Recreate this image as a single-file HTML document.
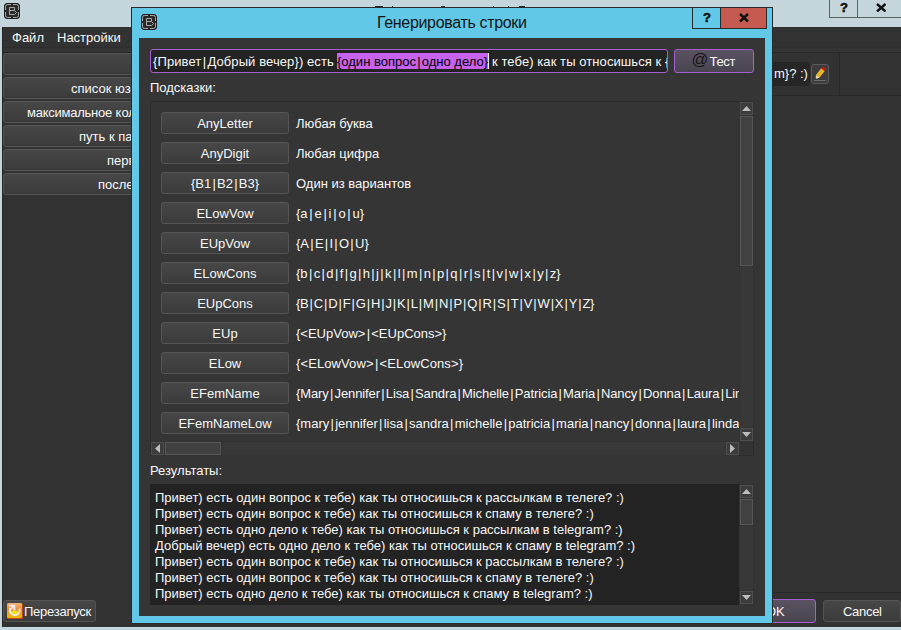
<!DOCTYPE html>
<html><head><meta charset="utf-8">
<style>
*{margin:0;padding:0;box-sizing:border-box}
html,body{width:901px;height:630px;overflow:hidden;background:#c5d5dc;font-family:"Liberation Sans",sans-serif;font-size:13px;color:#f8f8f8}
.a{position:absolute}
.t{position:absolute;white-space:pre;line-height:16px}
.btn{position:absolute;border:1px solid #555;border-radius:3px;background:linear-gradient(#474747,#3b3b3b)}
.pbtn{position:absolute;border:1px solid #a65fd0;border-radius:3px;background:linear-gradient(#5a5262,#4a4450)}
.sb{position:absolute;border:1px solid #4f4f4f;background:#3c3c3c}
.p{display:inline-block;margin:0 1.25px}
.hb{position:absolute;left:10px;width:128px;height:22px;border:1px solid #555;border-radius:2.5px;background:linear-gradient(#474747,#3b3b3b);text-align:center;line-height:22px;white-space:pre}
.hd{position:absolute;left:145px;white-space:pre;line-height:16px}
</style></head><body>

<svg class="a" style="left:4px;top:3px" width="16" height="16" viewBox="0 0 16 16">
<rect x="0.5" y="0.5" width="15" height="15" rx="2.5" fill="#2a2a2a" stroke="#1c1c1c"/>
<path d="M1.5 7V3.5Q1.5 1.5 3.5 1.5H7M9 1.5H12.5Q14.5 1.5 14.5 3.5V7M14.5 9V12.5Q14.5 14.5 12.5 14.5H9M7 14.5H3.5Q1.5 14.5 1.5 12.5V9" fill="none" stroke="#a8a8a8" stroke-width="1"/>
<path d="M5.5 4.5H10.5V7.5M5.5 4.5V11.5H10.5L12.5 9.5L10.5 7.5H5.5" fill="none" stroke="#a8a8a8" stroke-width="1"/>
</svg>
<div class="a" style="left:829px;top:-1px;width:29px;height:19px;border:1px solid #5a6266;background:#c5d5dc"></div>
<div class="a" style="left:857px;top:-1px;width:45px;height:19px;border:1px solid #5a6266;background:#c5d5dc"></div>
<div class="t" style="left:840px;top:0px;font-weight:bold;color:#111;font-size:13px;-webkit-text-stroke:0.6px #111">?</div>
<svg class="a" style="left:875.5px;top:2.5px" width="10.5" height="9.5" viewBox="0 0 10.5 9.5"><path d="M1 1L9.5 8.5M9.5 1L1 8.5" stroke="#111" stroke-width="2.4" stroke-linecap="butt"/></svg>
<div class="a" style="left:2px;top:27px;width:899px;height:600px;background:#323232;border-left:1px solid #262626"></div>
<div class="a" style="left:3px;top:47px;width:898px;height:1px;background:#2d2d2d"></div>
<div class="a" style="left:3px;top:48px;width:898px;height:4px;background:#343434"></div>
<div class="a" style="left:3px;top:52px;width:898px;height:1px;background:#282828"></div>
<div class="t" style="left:12px;top:30px">Файл</div>
<div class="t" style="left:57px;top:30px">Настройки</div>
<div class="btn" style="left:3px;top:53px;width:140px;height:22px"></div>
<div class="btn" style="left:3px;top:77px;width:140px;height:22px"></div>
<div class="t" style="left:71px;top:81px">список юзеров</div>
<div class="btn" style="left:3px;top:101px;width:140px;height:22px"></div>
<div class="t" style="left:27px;top:105px"><span style="letter-spacing:-0.25px">максимальное</span> количество</div>
<div class="btn" style="left:3px;top:125px;width:140px;height:22px"></div>
<div class="t" style="left:79px;top:129px">путь к папке</div>
<div class="btn" style="left:3px;top:149px;width:140px;height:22px"></div>
<div class="t" style="left:107px;top:153px">первый</div>
<div class="btn" style="left:3px;top:173px;width:140px;height:22px"></div>
<div class="t" style="left:98px;top:177px">последний</div>
<div class="a" style="left:839px;top:52px;width:1px;height:43px;background:#282828"></div>
<div class="a" style="left:772px;top:95px;width:129px;height:1px;background:#282828"></div>
<div class="a" style="left:700px;top:62px;width:110px;height:24px;background:#262626;border-radius:4px"></div>
<div class="t" style="left:774px;top:66px">m}? :)</div>
<div class="a" style="left:811px;top:64px;width:18px;height:20px;border:1px solid #5a5a5a;border-radius:3px;background:#3c3c3c"></div>
<svg class="a" style="left:811px;top:64px" width="18" height="20" viewBox="0 0 18 20">
<polygon points="8.39,13.81 4.93,11.09 10.27,4.34 13.73,7.06" fill="#e8b428"/>
<polygon points="10.27,4.34 13.73,7.06 15.28,5.1 11.82,2.38" fill="#c41818"/>
<polygon points="8.39,13.81 4.93,11.09 4.6,15.2" fill="#f2e2b8"/>
<polygon points="5.6,14.2 4.8,13.6 4.4,15.4" fill="#111"/>
<rect x="3" y="16" width="11.5" height="1" fill="#707070"/>
</svg>
<div class="a" style="left:772px;top:592px;width:129px;height:1px;background:#282828"></div>
<div class="pbtn" style="left:740px;top:599px;width:76px;height:24px"></div>
<div class="t" style="left:766px;top:604px">OK</div>
<div class="btn" style="left:823px;top:600px;width:78px;height:22px"></div>
<div class="t" style="left:843px;top:604px;letter-spacing:-0.3px">Cancel</div>
<div class="btn" style="left:3px;top:600px;width:93px;height:22px"></div>
<svg class="a" style="left:7px;top:603px" width="16" height="16" viewBox="0 0 16 16">
<defs><linearGradient id="og" x1="0" y1="0" x2="0" y2="1"><stop offset="0" stop-color="#f2b27a"/><stop offset="0.45" stop-color="#ea9330"/><stop offset="1" stop-color="#f0b800"/></linearGradient></defs>
<rect x="0" y="0" width="16" height="16" rx="1.5" fill="#c04818"/>
<rect x="0" y="0" width="15" height="15" rx="1.5" fill="url(#og)"/>
<ellipse cx="7.6" cy="9.8" rx="3.4" ry="2.4" fill="#f6e200"/>
<path d="M3.4 5.2A4.9 4.9 0 1 0 12.4 5.6" fill="none" stroke="#ececf2" stroke-width="1.9"/>
<path d="M2.2 2.6H7.4V7.6" fill="none" stroke="#ececf2" stroke-width="1.7"/>
<path d="M7.2 2.8L3.6 6.2" fill="none" stroke="#ececf2" stroke-width="1.6"/>
</svg>
<div class="t" style="left:24px;top:604px;letter-spacing:-0.25px">Перезапуск</div>
<div class="a" style="left:375px;top:6px;width:8px;height:1px;background:#222"></div>
<div class="a" style="left:392px;top:6px;width:1px;height:1px;background:#222"></div>
<div class="a" style="left:441px;top:6px;width:4px;height:1px;background:#222"></div>
<div class="a" style="left:493px;top:6px;width:1px;height:1px;background:#222"></div>
<div class="a" style="left:508px;top:6px;width:1px;height:1px;background:#222"></div>
<div class="a" style="left:519px;top:6px;width:6px;height:1px;background:#222"></div>
<div class="a" style="left:131px;top:7px;width:642px;height:617px;background:#62c8e8;border:1px solid #2a2a2a"></div>
<div class="a" style="left:139px;top:38px;width:626px;height:578px;background:#353535"></div>
<svg class="a" style="left:141px;top:14px" width="16" height="16" viewBox="0 0 16 16">
<rect x="0.5" y="0.5" width="15" height="15" rx="2.5" fill="#2a2a2a" stroke="#1c1c1c"/>
<path d="M1.5 7V3.5Q1.5 1.5 3.5 1.5H7M9 1.5H12.5Q14.5 1.5 14.5 3.5V7M14.5 9V12.5Q14.5 14.5 12.5 14.5H9M7 14.5H3.5Q1.5 14.5 1.5 12.5V9" fill="none" stroke="#a8a8a8" stroke-width="1"/>
<path d="M5.5 4.5H10.5V7.5M5.5 4.5V11.5H10.5L12.5 9.5L10.5 7.5H5.5" fill="none" stroke="#a8a8a8" stroke-width="1"/>
</svg>
<div class="t" style="left:377px;top:14px;font-size:16px;color:#151515;line-height:18px;letter-spacing:-0.33px">Генерировать строки</div>
<div class="a" style="left:692px;top:7px;width:29px;height:22px;border:1px solid #2a2a2a;background:#62c8e8"></div>
<div class="a" style="left:720px;top:7px;width:47px;height:22px;border:1px solid #2a2a2a;background:#c45a50"></div>
<div class="t" style="left:703px;top:10px;font-weight:bold;color:#111;font-size:13px;-webkit-text-stroke:0.6px #111">?</div>
<svg class="a" style="left:739px;top:13px" width="10" height="9.5" viewBox="0 0 10 9.5"><path d="M1 1L9 8.5M9 1L1 8.5" stroke="#111" stroke-width="2.4" stroke-linecap="butt"/></svg>
<div class="a" style="left:150px;top:49px;width:518px;height:24px;border:1px solid #a65fd0;border-radius:3px;background:#232323;overflow:hidden">
<div class="a" style="left:186px;top:3px;width:151px;height:16px;background:#c662ee"></div>
<div class="a" style="left:337px;top:3px;width:1px;height:16px;background:#f4f4f4"></div>
<div class="t" style="left:2px;top:4px;letter-spacing:0.1px">{Привет<span class="p">|</span>Добрый вечер}) есть</div>
<div class="t" style="left:186px;top:4px;color:#000">{один вопрос<span class="p">|</span>одно дело}</div>
<div class="t" style="left:341px;top:4px;letter-spacing:0.08px">к тебе) как ты относишься к {рассылкам<span class="p">|</span>спаму} в {телеге<span class="p">|</span>telegram}? :)</div>
</div>
<div class="pbtn" style="left:674px;top:49px;width:80px;height:24px"></div>
<div class="t" style="left:691.5px;top:50px;color:#141414;font-size:16.5px;line-height:18px;-webkit-text-stroke:0">@</div>
<div class="t" style="left:709.5px;top:54px;letter-spacing:-0.3px">Тест</div>
<div class="t" style="left:150px;top:80px">Подсказки:</div>
<div class="a" style="left:150px;top:101px;width:604px;height:355px;background:#353535;border:1px solid #2b2b2b"></div>
<div class="a" style="left:151px;top:102px;width:588px;height:340px;overflow:hidden">
<div class="hb" style="top:10px">AnyLetter</div>
<div class="hd" style="top:14px;">Любая буква</div>
<div class="hb" style="top:40px">AnyDigit</div>
<div class="hd" style="top:44px;">Любая цифра</div>
<div class="hb" style="top:70px">{B1<span class="p">|</span>B2<span class="p">|</span>B3}</div>
<div class="hd" style="top:74px;">Один из вариантов</div>
<div class="hb" style="top:100px">ELowVow</div>
<div class="hd" style="top:104px;">{a<span class="p" style="margin:0 1.75px">|</span>e<span class="p" style="margin:0 1.75px">|</span>i<span class="p" style="margin:0 1.75px">|</span>o<span class="p" style="margin:0 1.75px">|</span>u}</div>
<div class="hb" style="top:130px">EUpVow</div>
<div class="hd" style="top:134px;">{A<span class="p">|</span>E<span class="p">|</span>I<span class="p">|</span>O<span class="p">|</span>U}</div>
<div class="hb" style="top:160px">ELowCons</div>
<div class="hd" style="top:164px;">{b<span class="p" style="margin:0 1.37px">|</span>c<span class="p" style="margin:0 1.37px">|</span>d<span class="p" style="margin:0 1.37px">|</span>f<span class="p" style="margin:0 1.37px">|</span>g<span class="p" style="margin:0 1.37px">|</span>h<span class="p" style="margin:0 1.37px">|</span>j<span class="p" style="margin:0 1.37px">|</span>k<span class="p" style="margin:0 1.37px">|</span>l<span class="p" style="margin:0 1.37px">|</span>m<span class="p" style="margin:0 1.37px">|</span>n<span class="p" style="margin:0 1.37px">|</span>p<span class="p" style="margin:0 1.37px">|</span>q<span class="p" style="margin:0 1.37px">|</span>r<span class="p" style="margin:0 1.37px">|</span>s<span class="p" style="margin:0 1.37px">|</span>t<span class="p" style="margin:0 1.37px">|</span>v<span class="p" style="margin:0 1.37px">|</span>w<span class="p" style="margin:0 1.37px">|</span>x<span class="p" style="margin:0 1.37px">|</span>y<span class="p" style="margin:0 1.37px">|</span>z}</div>
<div class="hb" style="top:190px">EUpCons</div>
<div class="hd" style="top:194px;letter-spacing:-0.4px">{B<span class="p">|</span>C<span class="p">|</span>D<span class="p">|</span>F<span class="p">|</span>G<span class="p">|</span>H<span class="p">|</span>J<span class="p">|</span>K<span class="p">|</span>L<span class="p">|</span>M<span class="p">|</span>N<span class="p">|</span>P<span class="p">|</span>Q<span class="p">|</span>R<span class="p">|</span>S<span class="p">|</span>T<span class="p">|</span>V<span class="p">|</span>W<span class="p">|</span>X<span class="p">|</span>Y<span class="p">|</span>Z}</div>
<div class="hb" style="top:220px">EUp</div>
<div class="hd" style="top:224px;">{&lt;EUpVow&gt;<span class="p">|</span>&lt;EUpCons&gt;}</div>
<div class="hb" style="top:250px">ELow</div>
<div class="hd" style="top:254px;letter-spacing:0.1px">{&lt;ELowVow&gt;<span class="p">|</span>&lt;ELowCons&gt;}</div>
<div class="hb" style="top:280px">EFemName</div>
<div class="hd" style="top:284px;letter-spacing:-0.1px">{Mary<span class="p">|</span>Jennifer<span class="p">|</span>Lisa<span class="p">|</span>Sandra<span class="p">|</span>Michelle<span class="p">|</span>Patricia<span class="p">|</span>Maria<span class="p">|</span>Nancy<span class="p">|</span>Donna<span class="p">|</span>Laura<span class="p">|</span>Linda<span class="p">|</span>Barbara}</div>
<div class="hb" style="top:310px">EFemNameLow</div>
<div class="hd" style="top:314px;">{mary<span class="p">|</span>jennifer<span class="p">|</span>lisa<span class="p">|</span>sandra<span class="p">|</span>michelle<span class="p">|</span>patricia<span class="p">|</span>maria<span class="p">|</span>nancy<span class="p">|</span>donna<span class="p">|</span>laura<span class="p">|</span>linda<span class="p">|</span>barbara}</div>
</div>
<div class="a" style="left:739px;top:102px;width:15px;height:340px;background:#333"></div>
<div class="sb" style="left:740px;top:102px;width:13px;height:13px"></div>
<div class="sb" style="left:740px;top:116px;width:13px;height:150px;background:#414141;border-color:#575757"></div>
<div class="sb" style="left:740px;top:428px;width:13px;height:13px"></div>
<div class="a" style="left:740px;top:267px;width:13px;height:160px;background:#383838"></div>
<div class="a" style="left:151px;top:441px;width:588px;height:15px;background:#333"></div>
<div class="sb" style="left:151px;top:442px;width:13px;height:13px"></div>
<div class="sb" style="left:165px;top:442px;width:56px;height:13px;background:#414141;border-color:#575757"></div>
<div class="a" style="left:222px;top:442px;width:503px;height:13px;background:#383838"></div>
<div class="sb" style="left:726px;top:442px;width:13px;height:13px"></div>
<div class="a" style="left:740px;top:442px;width:13px;height:13px;background:#333"></div>
<svg class="a" style="left:742px;top:106px" width="9" height="5"><polygon points="0,5 9,5 4.5,0" fill="#bdbdbd"/></svg>
<svg class="a" style="left:742px;top:432px" width="9" height="5"><polygon points="0,0 9,0 4.5,5" fill="#bdbdbd"/></svg>
<svg class="a" style="left:155px;top:444px" width="5" height="9"><polygon points="5,0 5,9 0,4.5" fill="#bdbdbd"/></svg>
<svg class="a" style="left:730px;top:444px" width="5" height="9"><polygon points="0,0 0,9 5,4.5" fill="#bdbdbd"/></svg>
<div class="t" style="left:150px;top:463px">Результаты:</div>
<div class="a" style="left:150px;top:484px;width:604px;height:121px;background:#232323;overflow:hidden">
<div class="t" style="left:5px;top:6px">Привет) есть один вопрос к тебе) как ты относишься к рассылкам в телеге? :)</div>
<div class="t" style="left:5px;top:22px">Привет) есть один вопрос к тебе) как ты относишься к спаму в телеге? :)</div>
<div class="t" style="left:5px;top:38px">Привет) есть одно дело к тебе) как ты относишься к рассылкам в telegram? :)</div>
<div class="t" style="left:5px;top:54px">Добрый вечер) есть одно дело к тебе) как ты относишься к спаму в telegram? :)</div>
<div class="t" style="left:5px;top:70px">Привет) есть один вопрос к тебе) как ты относишься к рассылкам в телеге? :)</div>
<div class="t" style="left:5px;top:86px">Привет) есть один вопрос к тебе) как ты относишься к спаму в телеге? :)</div>
<div class="t" style="left:5px;top:102px">Привет) есть одно дело к тебе) как ты относишься к спаму в telegram? :)</div>
<div class="a" style="left:589px;top:0;width:15px;height:121px;background:#333"></div>
</div>
<div class="sb" style="left:740px;top:485px;width:13px;height:13px"></div>
<div class="sb" style="left:740px;top:499px;width:13px;height:26px;background:#414141;border-color:#575757"></div>
<div class="a" style="left:740px;top:526px;width:13px;height:64px;background:#383838"></div>
<div class="sb" style="left:740px;top:591px;width:13px;height:13px"></div>
<svg class="a" style="left:742px;top:489px" width="9" height="5"><polygon points="0,5 9,5 4.5,0" fill="#bdbdbd"/></svg>
<svg class="a" style="left:742px;top:595px" width="9" height="5"><polygon points="0,0 9,0 4.5,5" fill="#bdbdbd"/></svg>
</body></html>
